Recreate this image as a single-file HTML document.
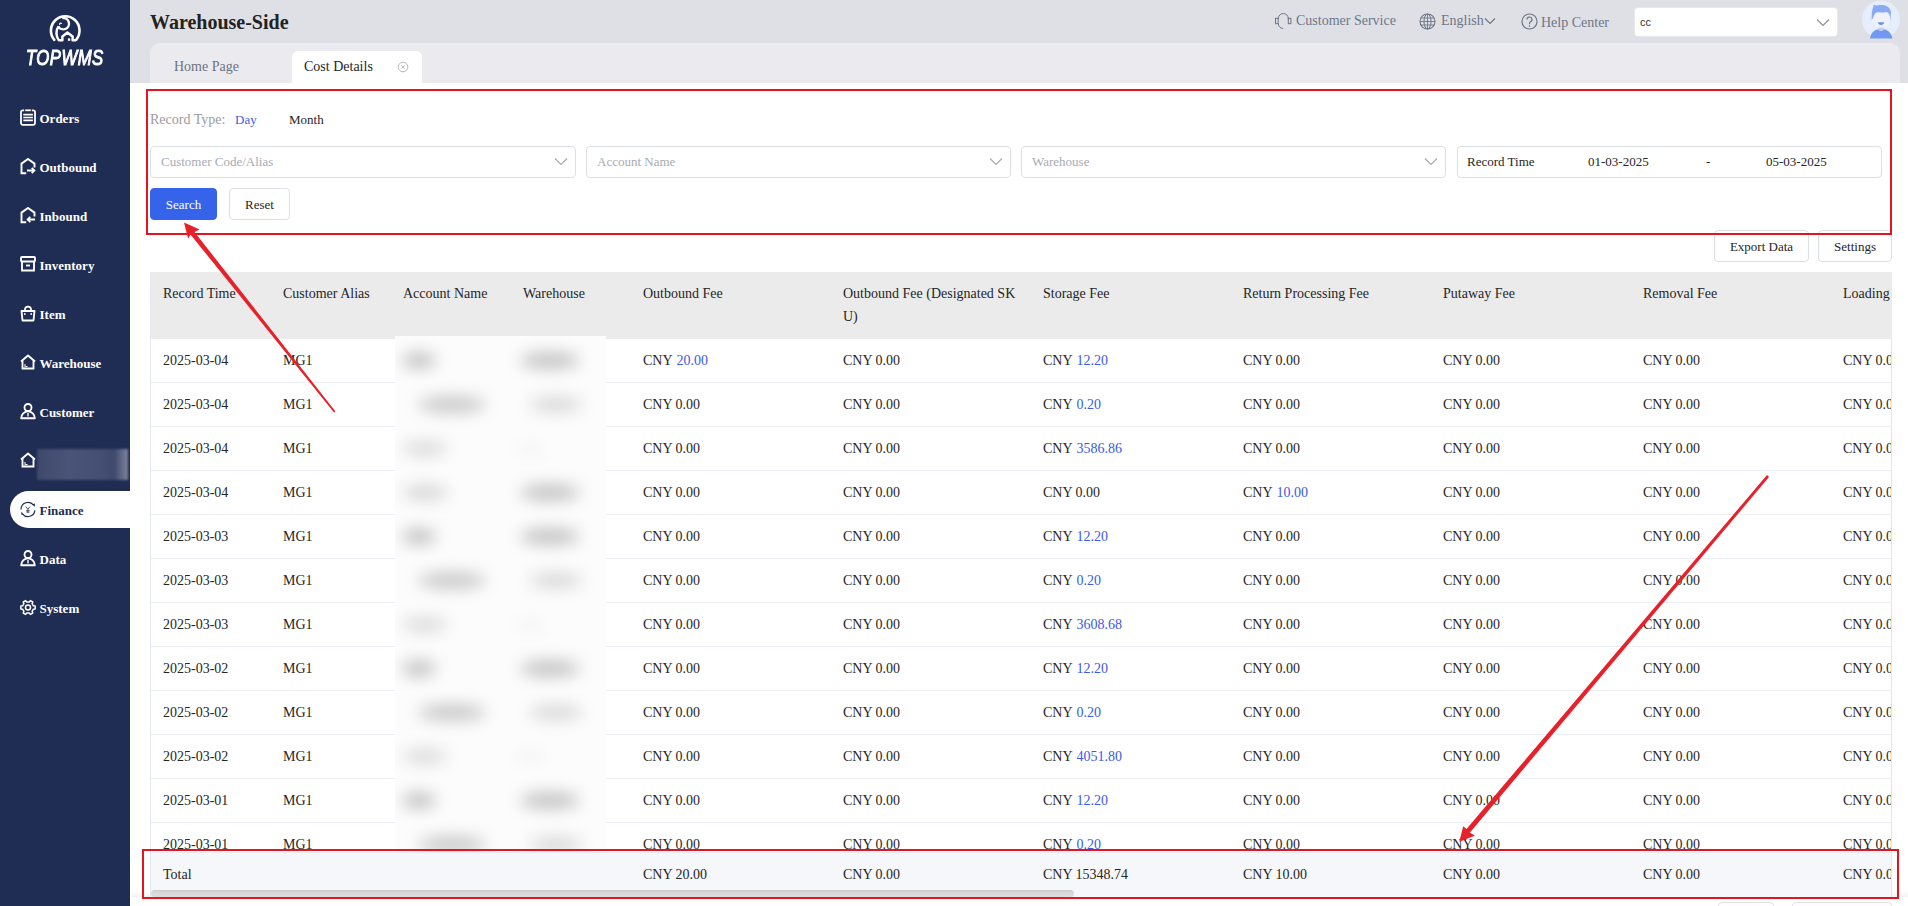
<!DOCTYPE html><html><head><meta charset="utf-8"><style>
*{box-sizing:border-box;margin:0;padding:0}
html,body{width:1908px;height:906px;overflow:hidden;background:#fff;font-family:"Liberation Serif",serif;color:#262626}
.a{position:absolute;white-space:nowrap}
#side{position:absolute;left:0;top:0;width:130px;height:906px;background:#1f2c54}
.nav{position:absolute;left:0;width:130px;height:20px;color:#fff;font-weight:bold;font-size:13px;white-space:nowrap}
.nav svg{position:absolute;left:20px;top:0.5px}
.nav span{position:absolute;left:39.5px;top:1px;line-height:20px}
#hdr{position:absolute;left:130px;top:0;width:1778px;height:83px;background:#dfe0e5}
#tabs{position:absolute;left:150px;top:43px;width:1750px;height:40px;background:#ebebef;border-radius:10px 10px 0 0}
.inp{position:absolute;top:146px;width:425px;height:32px;border:1px solid #dcdfe6;border-radius:4px;background:#fff}
.inp .ph{position:absolute;left:10px;top:5px;font-size:13px;color:#a8abb2;line-height:20px;white-space:nowrap}
.inp svg{position:absolute;right:7px;top:10px}
.btn{position:absolute;height:32px;border:1px solid #dcdfe6;border-radius:4px;background:#fff;font-size:13px;text-align:center;line-height:32px;color:#262626;white-space:nowrap}
.rb{position:absolute;border:2px solid #e5141e}
#tbl{position:absolute;left:150px;top:272px;width:1742px;height:626px;overflow:hidden}
.th{position:absolute;left:0;top:0;width:1742px;height:66.5px;background:#ebebeb}
.c{position:absolute;font-size:14px;line-height:22px;white-space:nowrap}
.rw{position:absolute;left:0;width:1742px;height:44px;border-bottom:1px solid #ebeef5}
.bl{color:#3a5ae6;margin-left:1px}
</style></head><body><div id="side">
<svg class="a" style="left:45px;top:10px" width="40" height="35" viewBox="45 10 40 35">
<path d="M54.3 39.8 A14.3 14.3 0 1 1 76.3 39.6" fill="none" stroke="#fff" stroke-width="2.6" stroke-linecap="round"/>
<path d="M62.2 18.1 A5.7 5.7 0 1 1 58.2 26.2" fill="none" stroke="#fff" stroke-width="2.4"/>
<path d="M58.6 26.5 C55.6 30 55.8 36.5 58.8 40.2 L62.4 40.2 L62.4 36.4 L67.4 32.6 L72.6 36.4 L72.6 40.2 L76.2 40.2" fill="none" stroke="#fff" stroke-width="2.5" stroke-linejoin="round"/>
<path d="M59.6 24.8 a1.3 1.3 0 0 1 2.2 -1.2" fill="none" stroke="#fff" stroke-width="1.2"/>
<rect x="67.9" y="38.4" width="2.3" height="2.4" fill="#fff"/>
</svg>
<div class="a" style="left:26px;top:46px;font-family:'Liberation Sans',sans-serif;font-style:italic;font-size:22px;line-height:24px;color:#fff;transform:scaleX(0.76);transform-origin:0 0;letter-spacing:0.6px;-webkit-text-stroke:1.1px #fff">TOPWMS</div>
<div class="nav" style="top:108px;color:#fff"><svg width="16" height="17" viewBox="0 0 16 17"><path d="M4.2 1.3H2.8a1.8 1.8 0 0 0-1.8 1.8V14a1.8 1.8 0 0 0 1.8 1.8h10.4a1.8 1.8 0 0 0 1.8-1.8V3.1a1.8 1.8 0 0 0-1.8-1.8H11.8" fill="none" stroke="#fff" stroke-width="1.8"/><path d="M5.3 1.3h5.5" stroke="#fff" stroke-width="1.8"/><path d="M3.3 5.6h9.6M3.3 8.5h9.6M3.3 11.4h9.6" stroke="#fff" stroke-width="1.7"/></svg>
<span>Orders</span>
</div>
<div class="nav" style="top:157px;color:#fff"><svg width="16" height="17" viewBox="0 0 16 17"><path d="M6.2 15.2H1.5V5.6L8 1L14.5 5.6V9.6" fill="none" stroke="#fff" stroke-width="1.9" stroke-linejoin="miter"/><path d="M7 12.5h7.2M11.7 9.9l2.7 2.6-2.7 2.6" fill="none" stroke="#fff" stroke-width="1.8"/></svg>
<span>Outbound</span>
</div>
<div class="nav" style="top:206px;color:#fff"><svg width="16" height="17" viewBox="0 0 16 17"><path d="M6.2 15.2H1.5V5.6L8 1L14.5 5.6V9.6" fill="none" stroke="#fff" stroke-width="1.9" stroke-linejoin="miter"/><path d="M15 12.5H7.6M10.3 9.9l-2.7 2.6 2.7 2.6" fill="none" stroke="#fff" stroke-width="1.8"/></svg>
<span>Inbound</span>
</div>
<div class="nav" style="top:255px;color:#fff"><svg width="16" height="17" viewBox="0 0 16 17"><rect x="1" y="1" width="14" height="4.5" rx="1" fill="none" stroke="#fff" stroke-width="1.85"/><path d="M2 5.5V14.5h12V5.5" fill="none" stroke="#fff" stroke-width="1.85"/><path d="M6 9.5h4" stroke="#fff" stroke-width="1.85"/></svg>
<span>Inventory</span>
</div>
<div class="nav" style="top:304px;color:#fff"><svg width="16" height="17" viewBox="0 0 16 17"><path d="M1.5 6h13l-1 9.5H2.5z" fill="none" stroke="#fff" stroke-width="1.85" stroke-linejoin="round"/><path d="M5 6V4.5a3 3 0 0 1 6 0V6" fill="none" stroke="#fff" stroke-width="1.75"/><circle cx="4.8" cy="9" r="0.9" fill="#fff"/><circle cx="11.2" cy="9" r="0.9" fill="#fff"/></svg>
<span>Item</span>
</div>
<div class="nav" style="top:353px;color:#fff"><svg width="16" height="17" viewBox="0 0 16 17"><path d="M1 7.5L8 1.5L15 7.5" fill="none" stroke="#fff" stroke-width="1.85" stroke-linejoin="round"/><path d="M2.5 6.5V14.5h11V6.5" fill="none" stroke="#fff" stroke-width="1.85"/><path d="M5 10v3.5M5.5 12.5h2" stroke="#fff" stroke-width="1"/></svg>
<span>Warehouse</span>
</div>
<div class="nav" style="top:402px;color:#fff"><svg width="16" height="17" viewBox="0 0 16 17"><circle cx="8" cy="4.5" r="3.5" fill="none" stroke="#fff" stroke-width="1.85"/><path d="M1.2 15.2a6.8 6.8 0 0 1 13.6 0z" fill="none" stroke="#fff" stroke-width="1.85" stroke-linejoin="round"/><path d="M8 10v3.5" stroke="#fff" stroke-width="1.4"/></svg>
<span>Customer</span>
</div>
<div class="nav" style="top:451px;color:#fff"><svg width="16" height="17" viewBox="0 0 16 17"><path d="M1 7.5L8 1.5L15 7.5" fill="none" stroke="#fff" stroke-width="1.85" stroke-linejoin="round"/><path d="M2.5 6.5V14.5h11V6.5" fill="none" stroke="#fff" stroke-width="1.85"/><path d="M5 10v3.5M5.5 12.5h2" stroke="#fff" stroke-width="1"/></svg>
</div>
<div class="a" style="left:37px;top:449px;width:91px;height:31px;background:linear-gradient(90deg,#3f496c 0%,#4a5478 35%,#454f73 70%,#3f496d 85%,#7d849d 100%);filter:blur(1px)"></div>
<div class="a" style="left:10px;top:491px;width:120px;height:37px;background:#fff;border-radius:18.5px 0 0 18.5px"></div>
<div class="nav" style="top:500px;color:#1f2c54"><svg width="16" height="17" viewBox="0 0 16 17"><path d="M1 8.6A7 7 0 0 1 13.6 4.2" fill="none" stroke="#1f2c54" stroke-width="1.2"/><path d="M12.3 3.2L15 2.6L14.6 6z" fill="#1f2c54"/><path d="M14.9 9.4A7 7 0 0 1 2.4 12.8" fill="none" stroke="#1f2c54" stroke-width="1.2"/><path d="M3.7 14L1.1 13.6L1.6 10.4z" fill="#1f2c54"/><path d="M5.8 5.6L7.9 8.4L10 5.6M7.9 8.4v3.8M6.2 9.6h3.4M6.2 11h3.4" fill="none" stroke="#4a5270" stroke-width="1"/></svg>
<span>Finance</span>
</div>
<div class="nav" style="top:549px;color:#fff"><svg width="16" height="17" viewBox="0 0 16 17"><circle cx="8" cy="4.5" r="3.5" fill="none" stroke="#fff" stroke-width="1.85"/><path d="M1.2 15.2a6.8 6.8 0 0 1 13.6 0z" fill="none" stroke="#fff" stroke-width="1.85" stroke-linejoin="round"/><path d="M8 10v3.5" stroke="#fff" stroke-width="1.4"/></svg>
<span>Data</span>
</div>
<div class="nav" style="top:598px;color:#fff"><svg width="16" height="17" viewBox="0 0 16 17"><path d="M13.36 6.86 L15.17 7.11 L15.17 9.89 L13.36 10.14 L12.10 12.32 L12.79 14.01 L10.38 15.40 L9.26 13.96 L6.74 13.96 L5.62 15.40 L3.21 14.01 L3.90 12.32 L2.64 10.14 L0.83 9.89 L0.83 7.11 L2.64 6.86 L3.90 4.68 L3.21 2.99 L5.62 1.60 L6.74 3.04 L9.26 3.04 L10.38 1.60 L12.79 2.99 L12.10 4.68Z" fill="none" stroke="#fff" stroke-width="1.5" stroke-linejoin="round"/><circle cx="8" cy="8.5" r="2.5" fill="none" stroke="#fff" stroke-width="1.5"/></svg>
<span>System</span>
</div>
</div>
<div id="hdr"></div>
<div class="a" style="left:150px;top:9px;font-size:20px;line-height:26px;font-weight:bold;color:#222">Warehouse-Side</div>
<svg class="a" style="left:1270px;top:10px" width="26" height="22" viewBox="1270 10 26 22"><path d="M1278.3 19.5V18.5a5 5 0 0 1 10 0v1" fill="none" stroke="#6e7687" stroke-width="1"/><rect x="1275.5" y="18.3" width="2.6" height="5.4" fill="none" stroke="#6e7687" stroke-width="1"/><rect x="1288.3" y="18.3" width="2.6" height="5.4" fill="none" stroke="#6e7687" stroke-width="1"/><path d="M1278.3 23.5c0 3 2 4.8 4.8 5" fill="none" stroke="#6e7687" stroke-width="1"/></svg>
<div class="a" style="left:1296px;top:11px;font-size:14px;line-height:20px;color:#6e7687">Customer Service</div>
<svg class="a" style="left:1419px;top:13px" width="17" height="17" viewBox="0 0 17 17"><circle cx="8.5" cy="8.5" r="7.5" fill="none" stroke="#6e7687" stroke-width="1.1"/><ellipse cx="8.5" cy="8.5" rx="3.5" ry="7.5" fill="none" stroke="#6e7687" stroke-width="1"/><path d="M8.5 1v15M1 8.5h15M2 5h13M2 12h13" stroke="#6e7687" stroke-width="0.9"/></svg>
<div class="a" style="left:1441px;top:11px;font-size:14px;line-height:20px;color:#6e7687">English</div>
<svg class="a" style="left:1484px;top:17px" width="12" height="8" viewBox="0 0 12 8"><path d="M1 1.5l5 5 5-5" fill="none" stroke="#6e7687" stroke-width="1.2"/></svg>
<svg class="a" style="left:1521px;top:13px" width="17" height="17" viewBox="0 0 17 17"><circle cx="8.5" cy="8.5" r="7.5" fill="none" stroke="#6e7687" stroke-width="1.2"/><path d="M6 6.5a2.5 2.5 0 1 1 3.5 2.3c-.7.4-1 .8-1 1.6v.8" fill="none" stroke="#6e7687" stroke-width="1.2"/><circle cx="8.5" cy="13" r="0.8" fill="#6e7687"/></svg>
<div class="a" style="left:1541px;top:12.5px;font-size:14px;line-height:20px;color:#6e7687">Help Center</div>
<div class="a" style="left:1633.5px;top:7px;width:204px;height:30px;background:#fff;border-radius:4px;border:1px solid #e6e8ee"></div>
<div class="a" style="left:1640px;top:12px;font-family:'Liberation Sans',sans-serif;font-size:11px;line-height:20px;color:#333">cc</div>
<svg class="a" style="left:1816px;top:18px" width="14" height="9" viewBox="0 0 14 9"><path d="M1 1.5l6 6 6-6" fill="none" stroke="#8a8f99" stroke-width="1.2"/></svg>
<svg class="a" style="left:1858px;top:0px" width="46" height="40" viewBox="1858 0 46 40"><circle cx="1881" cy="19.6" r="19" fill="#e6edfc"/>
<path d="M1870 38.5 C1871 32 1875 29 1881 29 C1887 29 1891 32 1892.5 38.5 Z" fill="#7199f1"/>
<rect x="1878.3" y="26" width="5.4" height="5" rx="2" fill="#bccff8"/>
<ellipse cx="1871.5" cy="18.5" rx="1.4" ry="2" fill="#d4e0fb"/><ellipse cx="1890.5" cy="18.5" rx="1.4" ry="2" fill="#d4e0fb"/>
<ellipse cx="1881" cy="19" rx="9" ry="8.7" fill="#edf2fd"/>
<path d="M1872 19 C1871 12 1873 8 1874 4.2 C1875 5.5 1876 5.8 1878 5.2 C1884 4.5 1890 6 1891 12 L1890.5 18.5 C1889.5 15 1889 13 1887 12 C1882 13 1878 12.5 1878 12 C1876.5 12.5 1874 13 1873 18.5 Z" fill="#8aabf3"/>
<path d="M1877.8 22.3 L1884.2 22.3 C1884 24.3 1882.5 25 1881 25 C1879.5 25 1878 24.3 1877.8 22.3 Z" fill="#6a92ee"/>
</svg>
<div id="tabs"></div>
<div class="a" style="left:174px;top:57px;font-size:14px;line-height:20px;color:#6b7280">Home Page</div>
<div class="a" style="left:292px;top:51px;width:130px;height:32px;background:#fff;border-radius:6px 6px 0 0"></div>
<div class="a" style="left:304px;top:57px;font-size:14px;line-height:20px;color:#262626">Cost Details</div>
<svg class="a" style="left:397px;top:61px" width="12" height="12" viewBox="0 0 12 12"><circle cx="6" cy="6" r="4.8" fill="none" stroke="#b4b8c0" stroke-width="1"/><path d="M4.2 4.2l3.6 3.6M7.8 4.2l-3.6 3.6" stroke="#b4b8c0" stroke-width="1"/></svg>
<div class="a" style="left:150px;top:110px;font-size:14px;line-height:20px;color:#9a9ca3">Record Type:</div>
<div class="a" style="left:235px;top:110px;font-size:13px;line-height:20px;color:#3d5fe0">Day</div>
<div class="a" style="left:289px;top:110px;font-size:13px;line-height:20px;color:#262626">Month</div>
<div class="inp" style="left:150px;width:426px"><div class="ph">Customer Code/Alias</div><svg width="14" height="9" viewBox="0 0 14 9"><path d="M1 1.5l6 6 6-6" fill="none" stroke="#a8abb2" stroke-width="1.2"/></svg></div>
<div class="inp" style="left:586px;width:425px"><div class="ph">Account Name</div><svg width="14" height="9" viewBox="0 0 14 9"><path d="M1 1.5l6 6 6-6" fill="none" stroke="#a8abb2" stroke-width="1.2"/></svg></div>
<div class="inp" style="left:1021px;width:425px"><div class="ph">Warehouse</div><svg width="14" height="9" viewBox="0 0 14 9"><path d="M1 1.5l6 6 6-6" fill="none" stroke="#a8abb2" stroke-width="1.2"/></svg></div>
<div class="inp" style="left:1457px;width:425px"></div>
<div class="a" style="left:1467px;top:152px;font-size:13px;line-height:20px;color:#262626">Record Time</div>
<div class="a" style="left:1588px;top:152px;font-size:13px;line-height:20px;color:#262626">01-03-2025</div>
<div class="a" style="left:1706px;top:152px;font-size:13px;line-height:20px;color:#262626">-</div>
<div class="a" style="left:1766px;top:152px;font-size:13px;line-height:20px;color:#262626">05-03-2025</div>
<div class="btn" style="left:150px;top:188px;width:67px;background:#3563e9;border-color:#3563e9;color:#fff">Search</div>
<div class="btn" style="left:229px;top:188px;width:61px">Reset</div>
<div class="btn" style="left:1714px;top:230px;width:95px">Export Data</div>
<div class="btn" style="left:1818px;top:230px;width:74px">Settings</div>
<div class="rb" style="left:146px;top:89px;width:1746px;height:146px"></div>
<div class="a" style="left:131px;top:891px;width:1777px;height:6px;background:linear-gradient(rgba(0,0,0,0),rgba(0,0,0,0.05))"></div>
<div id="tbl">
<div class="th"></div>
<div class="c" style="left:13px;top:11px">Record Time</div>
<div class="c" style="left:133px;top:11px">Customer Alias</div>
<div class="c" style="left:253px;top:11px">Account Name</div>
<div class="c" style="left:373px;top:11px">Warehouse</div>
<div class="c" style="left:493px;top:11px">Outbound Fee</div>
<div class="c" style="left:693px;top:11px">Outbound Fee (Designated SK</div>
<div class="c" style="left:893px;top:11px">Storage Fee</div>
<div class="c" style="left:1093px;top:11px">Return Processing Fee</div>
<div class="c" style="left:1293px;top:11px">Putaway Fee</div>
<div class="c" style="left:1493px;top:11px">Removal Fee</div>
<div class="c" style="left:1693px;top:11px">Loading Fee</div>
<div class="c" style="left:693px;top:34px">U)</div>
<div class="rw" style="top:66.5px"></div>
<div class="c" style="left:13px;top:77.5px">2025-03-04</div>
<div class="c" style="left:133px;top:77.5px">MG1</div>
<div class="c" style="left:493px;top:77.5px">CNY <span class="bl">20.00</span></div>
<div class="c" style="left:693px;top:77.5px">CNY 0.00</div>
<div class="c" style="left:893px;top:77.5px">CNY <span class="bl">12.20</span></div>
<div class="c" style="left:1093px;top:77.5px">CNY 0.00</div>
<div class="c" style="left:1293px;top:77.5px">CNY 0.00</div>
<div class="c" style="left:1493px;top:77.5px">CNY 0.00</div>
<div class="c" style="left:1693px;top:77.5px">CNY 0.00</div>
<div class="rw" style="top:110.5px"></div>
<div class="c" style="left:13px;top:121.5px">2025-03-04</div>
<div class="c" style="left:133px;top:121.5px">MG1</div>
<div class="c" style="left:493px;top:121.5px">CNY 0.00</div>
<div class="c" style="left:693px;top:121.5px">CNY 0.00</div>
<div class="c" style="left:893px;top:121.5px">CNY <span class="bl">0.20</span></div>
<div class="c" style="left:1093px;top:121.5px">CNY 0.00</div>
<div class="c" style="left:1293px;top:121.5px">CNY 0.00</div>
<div class="c" style="left:1493px;top:121.5px">CNY 0.00</div>
<div class="c" style="left:1693px;top:121.5px">CNY 0.00</div>
<div class="rw" style="top:154.5px"></div>
<div class="c" style="left:13px;top:165.5px">2025-03-04</div>
<div class="c" style="left:133px;top:165.5px">MG1</div>
<div class="c" style="left:493px;top:165.5px">CNY 0.00</div>
<div class="c" style="left:693px;top:165.5px">CNY 0.00</div>
<div class="c" style="left:893px;top:165.5px">CNY <span class="bl">3586.86</span></div>
<div class="c" style="left:1093px;top:165.5px">CNY 0.00</div>
<div class="c" style="left:1293px;top:165.5px">CNY 0.00</div>
<div class="c" style="left:1493px;top:165.5px">CNY 0.00</div>
<div class="c" style="left:1693px;top:165.5px">CNY 0.00</div>
<div class="rw" style="top:198.5px"></div>
<div class="c" style="left:13px;top:209.5px">2025-03-04</div>
<div class="c" style="left:133px;top:209.5px">MG1</div>
<div class="c" style="left:493px;top:209.5px">CNY 0.00</div>
<div class="c" style="left:693px;top:209.5px">CNY 0.00</div>
<div class="c" style="left:893px;top:209.5px">CNY 0.00</div>
<div class="c" style="left:1093px;top:209.5px">CNY <span class="bl">10.00</span></div>
<div class="c" style="left:1293px;top:209.5px">CNY 0.00</div>
<div class="c" style="left:1493px;top:209.5px">CNY 0.00</div>
<div class="c" style="left:1693px;top:209.5px">CNY 0.00</div>
<div class="rw" style="top:242.5px"></div>
<div class="c" style="left:13px;top:253.5px">2025-03-03</div>
<div class="c" style="left:133px;top:253.5px">MG1</div>
<div class="c" style="left:493px;top:253.5px">CNY 0.00</div>
<div class="c" style="left:693px;top:253.5px">CNY 0.00</div>
<div class="c" style="left:893px;top:253.5px">CNY <span class="bl">12.20</span></div>
<div class="c" style="left:1093px;top:253.5px">CNY 0.00</div>
<div class="c" style="left:1293px;top:253.5px">CNY 0.00</div>
<div class="c" style="left:1493px;top:253.5px">CNY 0.00</div>
<div class="c" style="left:1693px;top:253.5px">CNY 0.00</div>
<div class="rw" style="top:286.5px"></div>
<div class="c" style="left:13px;top:297.5px">2025-03-03</div>
<div class="c" style="left:133px;top:297.5px">MG1</div>
<div class="c" style="left:493px;top:297.5px">CNY 0.00</div>
<div class="c" style="left:693px;top:297.5px">CNY 0.00</div>
<div class="c" style="left:893px;top:297.5px">CNY <span class="bl">0.20</span></div>
<div class="c" style="left:1093px;top:297.5px">CNY 0.00</div>
<div class="c" style="left:1293px;top:297.5px">CNY 0.00</div>
<div class="c" style="left:1493px;top:297.5px">CNY 0.00</div>
<div class="c" style="left:1693px;top:297.5px">CNY 0.00</div>
<div class="rw" style="top:330.5px"></div>
<div class="c" style="left:13px;top:341.5px">2025-03-03</div>
<div class="c" style="left:133px;top:341.5px">MG1</div>
<div class="c" style="left:493px;top:341.5px">CNY 0.00</div>
<div class="c" style="left:693px;top:341.5px">CNY 0.00</div>
<div class="c" style="left:893px;top:341.5px">CNY <span class="bl">3608.68</span></div>
<div class="c" style="left:1093px;top:341.5px">CNY 0.00</div>
<div class="c" style="left:1293px;top:341.5px">CNY 0.00</div>
<div class="c" style="left:1493px;top:341.5px">CNY 0.00</div>
<div class="c" style="left:1693px;top:341.5px">CNY 0.00</div>
<div class="rw" style="top:374.5px"></div>
<div class="c" style="left:13px;top:385.5px">2025-03-02</div>
<div class="c" style="left:133px;top:385.5px">MG1</div>
<div class="c" style="left:493px;top:385.5px">CNY 0.00</div>
<div class="c" style="left:693px;top:385.5px">CNY 0.00</div>
<div class="c" style="left:893px;top:385.5px">CNY <span class="bl">12.20</span></div>
<div class="c" style="left:1093px;top:385.5px">CNY 0.00</div>
<div class="c" style="left:1293px;top:385.5px">CNY 0.00</div>
<div class="c" style="left:1493px;top:385.5px">CNY 0.00</div>
<div class="c" style="left:1693px;top:385.5px">CNY 0.00</div>
<div class="rw" style="top:418.5px"></div>
<div class="c" style="left:13px;top:429.5px">2025-03-02</div>
<div class="c" style="left:133px;top:429.5px">MG1</div>
<div class="c" style="left:493px;top:429.5px">CNY 0.00</div>
<div class="c" style="left:693px;top:429.5px">CNY 0.00</div>
<div class="c" style="left:893px;top:429.5px">CNY <span class="bl">0.20</span></div>
<div class="c" style="left:1093px;top:429.5px">CNY 0.00</div>
<div class="c" style="left:1293px;top:429.5px">CNY 0.00</div>
<div class="c" style="left:1493px;top:429.5px">CNY 0.00</div>
<div class="c" style="left:1693px;top:429.5px">CNY 0.00</div>
<div class="rw" style="top:462.5px"></div>
<div class="c" style="left:13px;top:473.5px">2025-03-02</div>
<div class="c" style="left:133px;top:473.5px">MG1</div>
<div class="c" style="left:493px;top:473.5px">CNY 0.00</div>
<div class="c" style="left:693px;top:473.5px">CNY 0.00</div>
<div class="c" style="left:893px;top:473.5px">CNY <span class="bl">4051.80</span></div>
<div class="c" style="left:1093px;top:473.5px">CNY 0.00</div>
<div class="c" style="left:1293px;top:473.5px">CNY 0.00</div>
<div class="c" style="left:1493px;top:473.5px">CNY 0.00</div>
<div class="c" style="left:1693px;top:473.5px">CNY 0.00</div>
<div class="rw" style="top:506.5px"></div>
<div class="c" style="left:13px;top:517.5px">2025-03-01</div>
<div class="c" style="left:133px;top:517.5px">MG1</div>
<div class="c" style="left:493px;top:517.5px">CNY 0.00</div>
<div class="c" style="left:693px;top:517.5px">CNY 0.00</div>
<div class="c" style="left:893px;top:517.5px">CNY <span class="bl">12.20</span></div>
<div class="c" style="left:1093px;top:517.5px">CNY 0.00</div>
<div class="c" style="left:1293px;top:517.5px">CNY 0.00</div>
<div class="c" style="left:1493px;top:517.5px">CNY 0.00</div>
<div class="c" style="left:1693px;top:517.5px">CNY 0.00</div>
<div class="rw" style="top:550.5px"></div>
<div class="c" style="left:13px;top:561.5px">2025-03-01</div>
<div class="c" style="left:133px;top:561.5px">MG1</div>
<div class="c" style="left:493px;top:561.5px">CNY 0.00</div>
<div class="c" style="left:693px;top:561.5px">CNY 0.00</div>
<div class="c" style="left:893px;top:561.5px">CNY <span class="bl">0.20</span></div>
<div class="c" style="left:1093px;top:561.5px">CNY 0.00</div>
<div class="c" style="left:1293px;top:561.5px">CNY 0.00</div>
<div class="c" style="left:1493px;top:561.5px">CNY 0.00</div>
<div class="c" style="left:1693px;top:561.5px">CNY 0.00</div>
<div class="a" style="left:245px;top:64px;width:211px;height:520px;background:#fcfcfc;overflow:hidden">
<div class="a" style="left:7.0px;top:16.0px;width:34px;height:17px;border-radius:50%;background:rgba(0,0,0,0.22);filter:blur(8px)"></div>
<div class="a" style="left:125.0px;top:16.0px;width:60px;height:17px;border-radius:50%;background:rgba(0,0,0,0.22);filter:blur(8px)"></div>
<div class="a" style="left:23.0px;top:60.0px;width:68px;height:17px;border-radius:50%;background:rgba(0,0,0,0.2);filter:blur(8px)"></div>
<div class="a" style="left:134.0px;top:61.0px;width:54px;height:15px;border-radius:50%;background:rgba(0,0,0,0.14);filter:blur(8px)"></div>
<div class="a" style="left:7.0px;top:105.0px;width:46px;height:15px;border-radius:50%;background:rgba(0,0,0,0.13);filter:blur(8px)"></div>
<div class="a" style="left:120.0px;top:107.5px;width:30px;height:10px;border-radius:50%;background:rgba(0,0,0,0.04);filter:blur(8px)"></div>
<div class="a" style="left:7.0px;top:149.0px;width:46px;height:15px;border-radius:50%;background:rgba(0,0,0,0.15);filter:blur(8px)"></div>
<div class="a" style="left:125.0px;top:148.0px;width:60px;height:17px;border-radius:50%;background:rgba(0,0,0,0.22);filter:blur(8px)"></div>
<div class="a" style="left:7.0px;top:192.0px;width:34px;height:17px;border-radius:50%;background:rgba(0,0,0,0.22);filter:blur(8px)"></div>
<div class="a" style="left:125.0px;top:192.0px;width:60px;height:17px;border-radius:50%;background:rgba(0,0,0,0.22);filter:blur(8px)"></div>
<div class="a" style="left:23.0px;top:236.0px;width:68px;height:17px;border-radius:50%;background:rgba(0,0,0,0.2);filter:blur(8px)"></div>
<div class="a" style="left:134.0px;top:237.0px;width:54px;height:15px;border-radius:50%;background:rgba(0,0,0,0.14);filter:blur(8px)"></div>
<div class="a" style="left:7.0px;top:281.0px;width:46px;height:15px;border-radius:50%;background:rgba(0,0,0,0.13);filter:blur(8px)"></div>
<div class="a" style="left:120.0px;top:283.5px;width:30px;height:10px;border-radius:50%;background:rgba(0,0,0,0.04);filter:blur(8px)"></div>
<div class="a" style="left:7.0px;top:324.0px;width:34px;height:17px;border-radius:50%;background:rgba(0,0,0,0.22);filter:blur(8px)"></div>
<div class="a" style="left:125.0px;top:324.0px;width:60px;height:17px;border-radius:50%;background:rgba(0,0,0,0.22);filter:blur(8px)"></div>
<div class="a" style="left:23.0px;top:368.0px;width:68px;height:17px;border-radius:50%;background:rgba(0,0,0,0.2);filter:blur(8px)"></div>
<div class="a" style="left:134.0px;top:369.0px;width:54px;height:15px;border-radius:50%;background:rgba(0,0,0,0.14);filter:blur(8px)"></div>
<div class="a" style="left:7.0px;top:413.0px;width:46px;height:15px;border-radius:50%;background:rgba(0,0,0,0.13);filter:blur(8px)"></div>
<div class="a" style="left:120.0px;top:415.5px;width:30px;height:10px;border-radius:50%;background:rgba(0,0,0,0.04);filter:blur(8px)"></div>
<div class="a" style="left:7.0px;top:456.0px;width:34px;height:17px;border-radius:50%;background:rgba(0,0,0,0.22);filter:blur(8px)"></div>
<div class="a" style="left:125.0px;top:456.0px;width:60px;height:17px;border-radius:50%;background:rgba(0,0,0,0.22);filter:blur(8px)"></div>
<div class="a" style="left:23.0px;top:500.0px;width:68px;height:17px;border-radius:50%;background:rgba(0,0,0,0.2);filter:blur(8px)"></div>
<div class="a" style="left:134.0px;top:501.0px;width:54px;height:15px;border-radius:50%;background:rgba(0,0,0,0.14);filter:blur(8px)"></div>
</div>
<div class="a" style="left:0;top:580px;width:1742px;height:46px;background:#f5f7fa;border-top:1px solid #ebeef5"></div>
<div class="c" style="left:13px;top:592px">Total</div>
<div class="c" style="left:493px;top:592px">CNY 20.00</div>
<div class="c" style="left:693px;top:592px">CNY 0.00</div>
<div class="c" style="left:893px;top:592px">CNY 15348.74</div>
<div class="c" style="left:1093px;top:592px">CNY 10.00</div>
<div class="c" style="left:1293px;top:592px">CNY 0.00</div>
<div class="c" style="left:1493px;top:592px">CNY 0.00</div>
<div class="c" style="left:1693px;top:592px">CNY 0.00</div>
<div class="a" style="left:1px;top:618px;width:923px;height:7px;background:linear-gradient(#c9c9c9,#dadada 40%,#dcdcdc);border-radius:4px"></div>
<div class="a" style="left:0;top:0px;width:1px;height:626px;background:#e6e8f0"></div>
<div class="a" style="left:1741px;top:66px;width:1px;height:560px;background:#e3e6ee"></div>
</div>
<div class="rb" style="left:142px;top:849px;width:1757px;height:50px"></div>
<div class="a" style="left:1718px;top:902px;width:56px;height:20px;border:1px solid #dcdfe6;border-radius:4px;background:#fff"></div>
<div class="a" style="left:1792px;top:902px;width:100px;height:20px;border:1px solid #dcdfe6;border-radius:4px;background:#fff"></div>
<svg class="a" style="left:0;top:0" width="1908" height="906" viewBox="0 0 1908 906">
<path d="M184 222.5 L199.6 229.4 L194.5 232 L335.5 411.5 L334 412.5 L190.5 234.5 L188.1 238.7 Z" fill="#e8202a"/>
<path d="M1459.3 841.7 L1463.2 826.3 L1466.5 829 L1767 475 L1769 477 L1470 832.5 L1474.8 835.7 Z" fill="#e8202a"/>
</svg></body></html>
